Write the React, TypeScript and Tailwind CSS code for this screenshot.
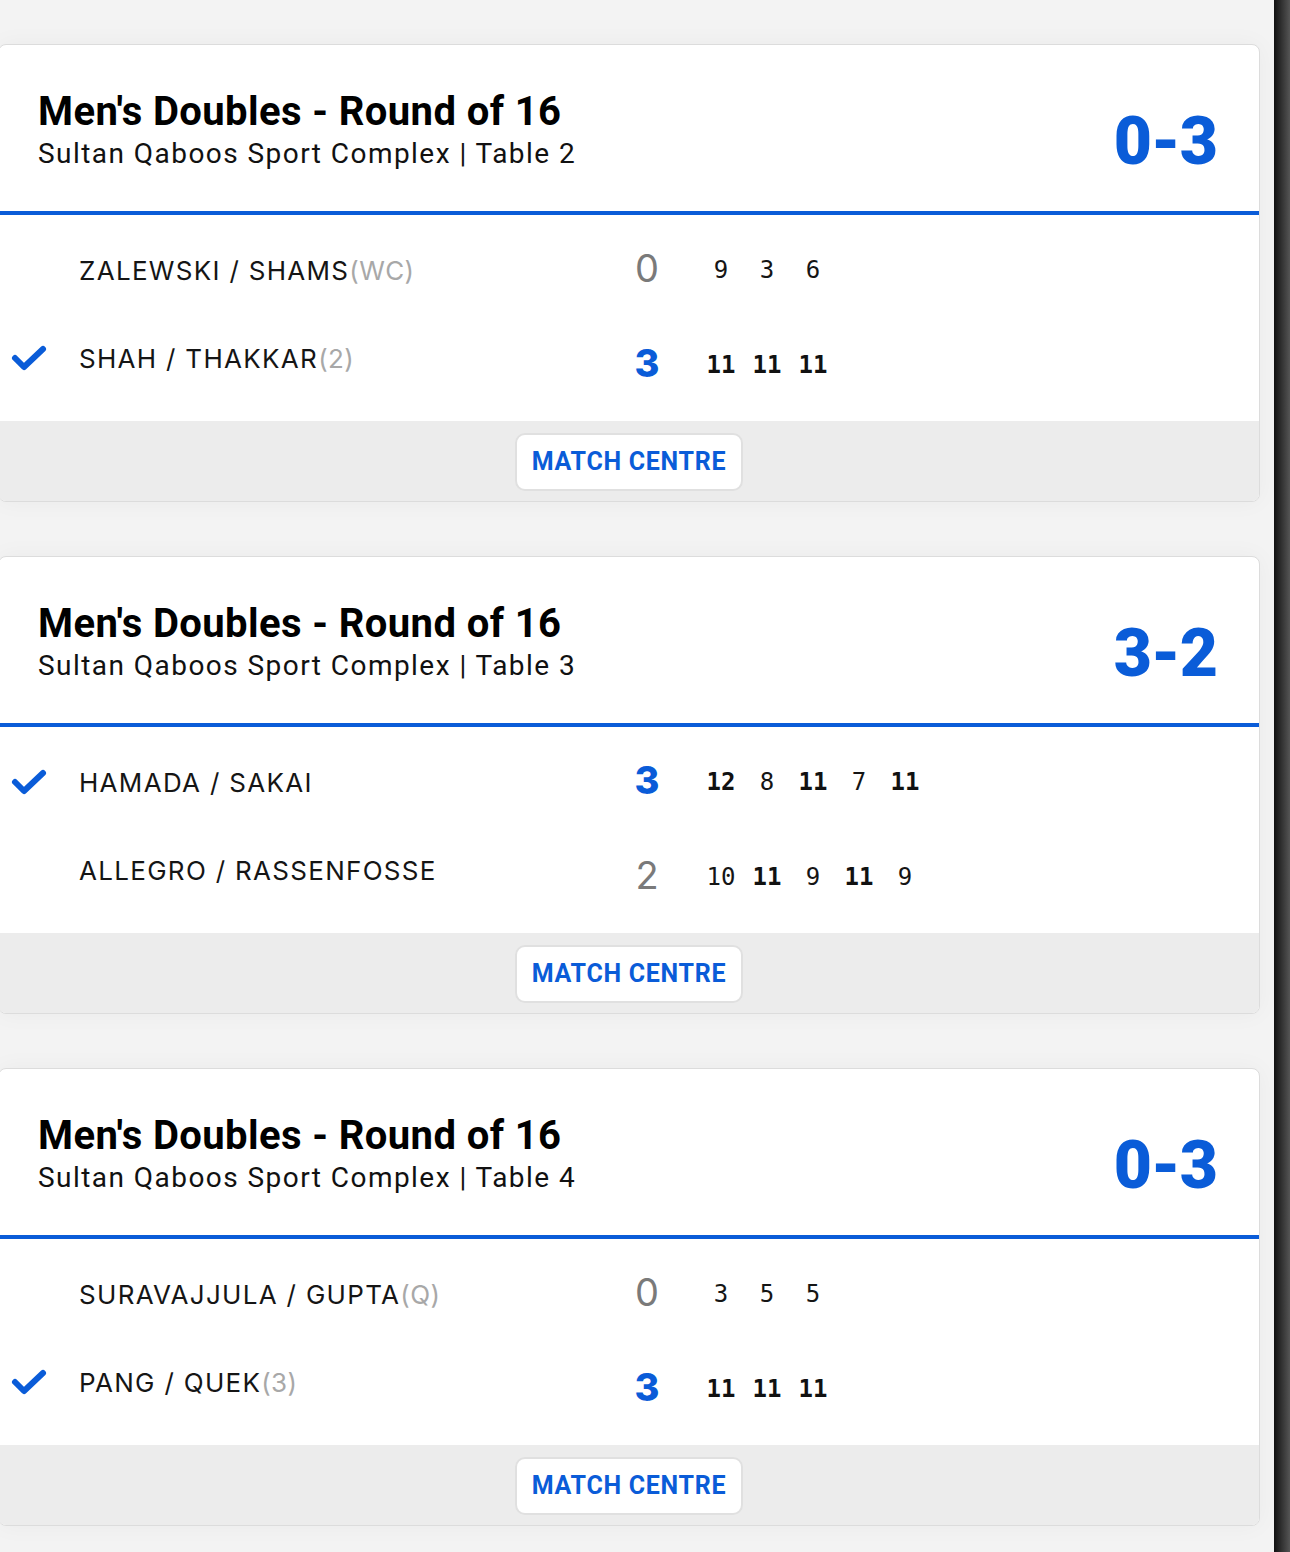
import React from "react";

type Player = {
  name: string;
  seed?: string;
  won: boolean;
  sets: number;
  games: { v: number; win: boolean }[];
};

type Match = {
  table: string;
  score: string;
  players: Player[];
};

const g = (vals: number[], wins: boolean[]) =>
  vals.map((v, i) => ({ v, win: wins[i] }));

const matches: Match[] = [
  {
    table: "Table 2",
    score: "0-3",
    players: [
      { name: "ZALEWSKI / SHAMS", seed: "(WC)", won: false, sets: 0, games: g([9, 3, 6], [false, false, false]) },
      { name: "SHAH / THAKKAR", seed: "(2)", won: true, sets: 3, games: g([11, 11, 11], [true, true, true]) },
    ],
  },
  {
    table: "Table 3",
    score: "3-2",
    players: [
      { name: "HAMADA / SAKAI", won: true, sets: 3, games: g([12, 8, 11, 7, 11], [true, false, true, false, true]) },
      { name: "ALLEGRO / RASSENFOSSE", won: false, sets: 2, games: g([10, 11, 9, 11, 9], [false, true, false, true, false]) },
    ],
  },
  {
    table: "Table 4",
    score: "0-3",
    players: [
      { name: "SURAVAJJULA / GUPTA", seed: "(Q)", won: false, sets: 0, games: g([3, 5, 5], [false, false, false]) },
      { name: "PANG / QUEK", seed: "(3)", won: true, sets: 3, games: g([11, 11, 11], [true, true, true]) },
    ],
  },
];

function Check() {
  return (
    <svg width="38" height="30" viewBox="0 0 38 30" className="text-[#0a5cd8]">
      <path
        d="M5 15 L14 24 L33 6"
        stroke="currentColor"
        strokeWidth="6"
        strokeLinecap="round"
        strokeLinejoin="round"
        fill="none"
      />
    </svg>
  );
}

function PlayerRow({ p, idx }: { p: Player; idx: number }) {
  return (
    <div className="flex h-[88px] items-center">
      <div className="flex w-[80px] items-center pl-[11px]">{p.won && <Check />}</div>
      <div className="flex w-[546px] items-baseline font-['Inter',sans-serif] text-[26px] tracking-[1.3px] text-[#151515]">
        {p.name}
        {p.seed && <span className="text-[#a8a8a8] tracking-[0.4px]">{p.seed}</span>}
      </div>
      {/* scores sit a bit apart from the name rows */}
      <div className={idx === 0 ? "flex items-center -translate-y-[2px]" : "flex items-center translate-y-[5px]"}>
        <div
          className={
            p.won
              ? "w-[44px] text-center font-['Inter',sans-serif] text-[38px] font-extrabold text-[#0a5cd8]"
              : "w-[44px] text-center font-['Inter',sans-serif] text-[38px] font-normal text-[#7a7a7a]"
          }
        >
          {p.sets}
        </div>
        <div className="ml-[29px] flex translate-y-[2px]">
          {p.games.map((x, i) => (
            <div
              key={i}
              className={
                x.win
                  ? "w-[46px] text-center font-['DejaVu_Sans_Mono',monospace] text-[24px] font-bold text-[#111]"
                  : "w-[46px] text-center font-['DejaVu_Sans_Mono',monospace] text-[24px] font-normal text-[#151515]"
              }
            >
              {x.v}
            </div>
          ))}
        </div>
      </div>
    </div>
  );
}

function MatchCard({ m }: { m: Match }) {
  return (
    <div className="ml-[-2px] w-[1262px] overflow-hidden rounded-[8px] border border-[#dcdcdc] bg-white shadow-[0_0_24px_rgba(0,0,0,0.04)]">
      <div className="flex h-[166px] items-center justify-between pl-[39px] pr-[42px]">
        <div className="flex flex-col pt-[5px]">
          <div className="font-['Roboto',sans-serif] text-[40px] font-bold leading-[46px] tracking-[0.4px] text-black">
            Men's Doubles - Round of 16
          </div>
          <div className="font-['Roboto',sans-serif] text-[28px] leading-[38px] tracking-[1.45px] text-[#111]">
            Sultan Qaboos Sport Complex | {m.table}
          </div>
        </div>
        <div className="mt-[28px] font-['Roboto',sans-serif] text-[66px] font-black leading-none tracking-[-1px] text-[#0a5cd8]">
          {m.score}
        </div>
      </div>
      <div className="h-[4px] bg-[#0a5cd8]" />
      <div className="pt-[11px] pb-[19px]">
        {m.players.map((p, i) => (
          <PlayerRow key={p.name} p={p} idx={i} />
        ))}
      </div>
      <div className="flex h-[80px] justify-center bg-[#ececec] pt-[12px]">
        <button className="h-[58px] w-[228px] rounded-[10px] border-2 border-[#e0e0e0] bg-white font-['Roboto',sans-serif] text-[25px] font-bold tracking-[0.7px] text-[#0a5cd8]">
          MATCH CENTRE
        </button>
      </div>
    </div>
  );
}

export default function App() {
  return (
    <div className="flex h-[1552px] w-[1290px] overflow-hidden bg-[#f3f3f3]">
      <div className="flex w-[1274px] flex-col gap-[54px] pt-[44px]">
        {matches.map((m) => (
          <MatchCard key={m.table} m={m} />
        ))}
      </div>
      <div className="w-[16px] bg-gradient-to-r from-[#111] via-[#333] to-[#555]" />
    </div>
  );
}
